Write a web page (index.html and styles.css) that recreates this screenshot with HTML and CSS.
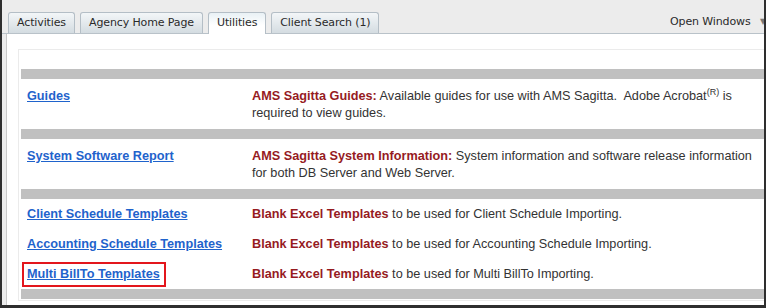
FILE: index.html
```html
<!DOCTYPE html>
<html lang="en">
<head>
  <meta charset="UTF-8">
  <title>Utilities</title>
  <link rel="stylesheet" href="styles.css">
</head>
<body>

<div class="window">
  <div class="tabbar">
    <div class="tab">Activities</div>
    <div class="tab">Agency Home Page</div>
    <div class="tab active">Utilities</div>
    <div class="tab">Client Search (1)</div>
    <div class="open-windows">Open Windows <span class="caret">&#9660;</span></div>
  </div>

  <div class="panel">
    <div class="box">
      <div class="grid">
        <div class="bar"></div>

        <div class="cell link-cell"><a href="#">Guides</a></div>
        <div class="cell desc"><b>AMS Sagitta Guides:</b> Available guides for use with AMS Sagitta.&nbsp; Adobe Acrobat<sup>(R)</sup> is required to view guides.</div>

        <div class="bar"></div>

        <div class="cell link-cell"><a href="#">System Software Report</a></div>
        <div class="cell desc"><b>AMS Sagitta System Information:</b> System information and software release information for both DB Server and Web Server.</div>

        <div class="bar"></div>

        <div class="cell link-cell tight"><a href="#">Client Schedule Templates</a></div>
        <div class="cell desc tight"><b>Blank Excel Templates</b> to be used for Client Schedule Importing.</div>

        <div class="cell link-cell tight"><a href="#">Accounting Schedule Templates</a></div>
        <div class="cell desc tight"><b>Blank Excel Templates</b> to be used for Accounting Schedule Importing.</div>

        <div class="cell link-cell tight"><span class="highlight"><a href="#">Multi BillTo Templates</a></span></div>
        <div class="cell desc tight"><b>Blank Excel Templates</b> to be used for Multi BillTo Importing.</div>

        <div class="bar"></div>
      </div>
    </div>
  </div>
</div>

</body>
</html>
```

FILE: styles.css
```css
:root {
  --frame: #2e2e2e;
  --tab-border: #b4bec6;
  --link: #1f63cc;
  --label: #961b1f;
  --text: #333;
  --bar: #c0c0c0;
}

* {
  box-sizing: border-box;
}

body {
  margin: 0;
  background: #fff;
}

.window {
  width: 766px;
  height: 308px;
  border-left: 2px solid var(--frame);
  border-right: 2px solid var(--frame);
  border-bottom: 3px solid var(--frame);
  background: #ececec;
  display: flex;
  flex-direction: column;
  overflow: hidden;
}

/* tab strip */
.tabbar {
  height: 34px;
  flex-shrink: 0;
  display: flex;
  align-items: flex-end;
  gap: 5px;
  padding-left: 6px;
  border-bottom: 1px solid #b9c2c9;
  font-family: 'DejaVu Sans', Verdana, sans-serif;
  font-size: 11px;
  letter-spacing: -0.12px;
  color: #2a2a2a;
}

.tab {
  height: 21px;
  line-height: 20px;
  padding: 0 8px;
  border: 1px solid var(--tab-border);
  border-bottom: none;
  border-radius: 3px 3px 0 0;
  background: linear-gradient(#f3f6f8, #d4dce1);
}

.tab.active {
  height: 22px;
  margin-bottom: -1px;
  background: linear-gradient(#e9f1f5, #fff 60%);
}

.open-windows {
  margin-left: auto;
  align-self: center;
  margin-top: 9px;
  margin-right: -2px;
  white-space: nowrap;
}

.caret {
  font-size: 8px;
  color: #777;
  margin-left: 6px;
  vertical-align: 1px;
}

/* content */
.panel {
  flex: 1;
  margin-left: 4px;
  border-left: 1px solid #c9c9c9;
  background: #fff;
  padding: 15px 0 4px 11px;
}

.box {
  height: 100%;
  border: 1px solid #ebebeb;
  border-right: none;
  padding: 19px 0 0 2px;
}

.grid {
  display: grid;
  grid-template-columns: 231px 1fr;
  font-family: 'Liberation Sans', Arial, sans-serif;
  font-size: 12.7px;
  line-height: 17px;
  color: var(--text);
}

.bar {
  grid-column: 1 / -1;
  height: 10px;
  background: var(--bar);
}

.cell {
  padding: 9px 0 7px;
}

.cell.tight {
  padding-top: 7px;
  padding-bottom: 6px;
}

.cell.link-cell {
  padding-left: 6px;
}

.link-cell a {
  color: var(--link);
  font-weight: bold;
  text-decoration: underline;
}

.cell.desc {
  padding-right: 2px;
}

.desc b {
  color: var(--label);
}

sup {
  font-size: 9px;
  line-height: 0;
  vertical-align: 5px;
}

.highlight {
  display: inline-block;
  margin: -4px 0 -4px -5px;
  padding: 2px 4px 2px 3px;
  border: 2px solid #e3161c;
}
```
